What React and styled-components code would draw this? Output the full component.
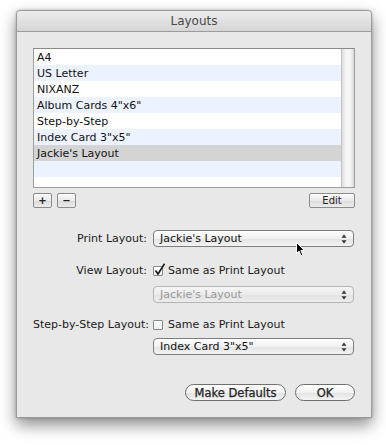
import React from 'react'
import styled, { createGlobalStyle } from 'styled-components'

const Global = createGlobalStyle`
  html, body {
    margin: 0;
    background: #ffffff;
    font-family: "DejaVu Sans", "Liberation Sans", sans-serif;
  }
`

const Page = styled.div`
  position: relative;
  width: 386px;
  height: 445px;
  overflow: hidden;
  padding: 10px 0 0 16px;
  box-sizing: border-box;
`

const Window = styled.div`
  width: 356px;
  height: 408px;
  box-sizing: border-box;
  background: #e8e8e8;
  border: 1px solid #9a9a9a;
  border-radius: 4px 4px 0 0;
  box-shadow: 0 7px 16px rgba(0, 0, 0, 0.45), 0 0 3px rgba(0, 0, 0, 0.25);
  display: flex;
  flex-direction: column;
`

const TitleBar = styled.div`
  height: 20px;
  flex: none;
  border-bottom: 1px solid #9c9c9c;
  border-radius: 4px 4px 0 0;
  background: linear-gradient(#ececec, #d6d6d6);
  display: flex;
  align-items: center;
  justify-content: center;
  font-size: 12px;
  color: #4a4a4a;
`

const Body = styled.div`
  padding: 16px 0 0 16px;
  display: flex;
  flex-direction: column;
`

const ListBox = styled.div`
  width: 322px;
  height: 140px;
  box-sizing: border-box;
  border: 1px solid #9d9d9d;
  border-top-color: #8a8a8a;
  background: #fff;
  display: flex;
  overflow: hidden;
`

const Rows = styled.div`
  flex: 1;
  display: flex;
  flex-direction: column;
`

const Row = styled.div`
  height: 16px;
  flex: none;
  padding-left: 3px;
  display: flex;
  align-items: center;
  font-size: 11px;
  color: #111;
  background: ${p => (p.$selected ? '#d4d4d4' : p.$alt ? '#edf3fe' : '#ffffff')};
`

const Scroll = styled.div`
  width: 12px;
  flex: none;
  border-left: 1px solid #c4c4c4;
  background: linear-gradient(90deg, #dcdcdc, #f7f7f7 35%, #f4f4f4 70%, #d8d8d8);
`

const ButtonBar = styled.div`
  width: 322px;
  margin-top: 5px;
  display: flex;
  gap: 5px;
`

const SmallButton = styled.div`
  width: ${p => p.$w}px;
  height: 15px;
  box-sizing: border-box;
  border: 1px solid #8c8c8c;
  border-radius: 2px;
  background: linear-gradient(#fdfdfd, #e9e9e9 50%, #dcdcdc 51%, #ececec);
  display: flex;
  align-items: center;
  justify-content: center;
  font-size: 10px;
  font-weight: ${p => (p.$bold ? 700 : 400)};
  color: #222;
  margin-left: ${p => (p.$push ? 'auto' : '0')};
`

const Form = styled.div`
  margin-top: 22px;
  display: grid;
  grid-template-columns: 114px 201px;
  column-gap: 6px;
  align-items: center;
`

const Label = styled.div`
  text-align: right;
  font-size: 11px;
  color: #1a1a1a;
  white-space: nowrap;
  margin-top: ${p => p.$top || 0}px;
`

const Popup = styled.div`
  height: 17px;
  box-sizing: border-box;
  border: 1px solid ${p => (p.$disabled ? '#b4b4b4' : '#7e7e7e')};
  border-radius: 4px;
  background: ${p =>
    p.$disabled
      ? 'linear-gradient(#f6f6f6, #ebebeb 50%, #e2e2e2 51%, #ededed)'
      : 'linear-gradient(#ffffff, #f0f0f0 50%, #e3e3e3 51%, #f3f3f3)'};
  display: flex;
  align-items: center;
  padding: 0 6px 0 6px;
  font-size: 11px;
  color: ${p => (p.$disabled ? '#9a9a9a' : '#111')};
  margin-top: ${p => p.$top || 0}px;
`

const PopupText = styled.span`
  flex: 1;
`

const Check = styled.div`
  display: flex;
  align-items: center;
  gap: 5px;
  font-size: 11px;
  color: #1a1a1a;
  margin-top: ${p => p.$top || 0}px;
`

const Box = styled.div`
  position: relative;
  width: 10px;
  height: 10px;
  box-sizing: border-box;
  border: 1px solid #8a8a8a;
  border-radius: 1px;
  background: linear-gradient(#ffffff, #ececec);
`

const Tick = styled.svg`
  position: absolute;
  left: 0px;
  top: -4px;
`

const Footer = styled.div`
  width: 322px;
  margin-top: 29px;
  display: flex;
  justify-content: flex-end;
  gap: 9px;
`

const PushButton = styled.div`
  width: ${p => p.$w}px;
  height: 17px;
  box-sizing: border-box;
  border: 1px solid #6f6f6f;
  border-radius: 9px;
  background: linear-gradient(#ffffff, #f1f1f1 50%, #e2e2e2 51%, #f4f4f4);
  display: flex;
  align-items: center;
  justify-content: center;
  font-size: 11.5px;
  font-weight: 400;
  -webkit-text-stroke: 0.25px #222;
  color: #222;
`

const Cursor = styled.svg`
  position: absolute;
  left: 296px;
  top: 242px;
`

const Arrows = () => (
  <svg width="6" height="10" viewBox="0 0 6 10">
    <path d="M3 0.5 L5.5 3.8 L0.5 3.8 Z M3 9.5 L5.5 6.2 L0.5 6.2 Z" fill="#333" />
  </svg>
)

const items = ['A4', 'US Letter', 'NIXANZ', 'Album Cards 4"x6"', 'Step-by-Step', 'Index Card 3"x5"', "Jackie's Layout", '', '']

export default function App() {
  return (
    <Page>
      <Global />
      <Window>
        <TitleBar>Layouts</TitleBar>
        <Body>
          <ListBox>
            <Rows>
              {items.map((t, i) => (
                <Row key={i} $alt={i % 2 === 1} $selected={i === 6}>{t}</Row>
              ))}
            </Rows>
            <Scroll />
          </ListBox>
          <ButtonBar>
            <SmallButton $w={19} $bold>+</SmallButton>
            <SmallButton $w={19} $bold>−</SmallButton>
            <SmallButton $w={46} $push>Edit</SmallButton>
          </ButtonBar>
          <Form>
            <Label>Print Layout:</Label>
            <Popup>
              <PopupText>Jackie's Layout</PopupText>
              <Arrows />
            </Popup>
            <Label $top={17}>View Layout:</Label>
            <Check $top={17}>
              <Box>
                <Tick width="12" height="13" viewBox="0 0 12 13">
                  <path d="M1.5 7.5 L4 11 L10.5 0.8" fill="none" stroke="#1a1a1a" strokeWidth="1.6" />
                </Tick>
              </Box>
              Same as Print Layout
            </Check>
            <div />
            <Popup $disabled $top={9}>
              <PopupText>Jackie's Layout</PopupText>
              <Arrows />
            </Popup>
            <Label $top={15}>Step-by-Step Layout:</Label>
            <Check $top={15}>
              <Box />
              Same as Print Layout
            </Check>
            <div />
            <Popup $top={7}>
              <PopupText>Index Card 3"x5"</PopupText>
              <Arrows />
            </Popup>
          </Form>
          <Footer>
            <PushButton $w={101}>Make Defaults</PushButton>
            <PushButton $w={60}>OK</PushButton>
          </Footer>
        </Body>
      </Window>
      <Cursor width="10" height="15" viewBox="0 0 10 15">
        <path d="M0.5 0.5 L0.5 11.5 L3 9 L5 13.8 L6.8 13 L4.9 8.4 L8.4 8.4 Z" fill="#000" stroke="#fff" strokeWidth="1" />
      </Cursor>
    </Page>
  )
}
